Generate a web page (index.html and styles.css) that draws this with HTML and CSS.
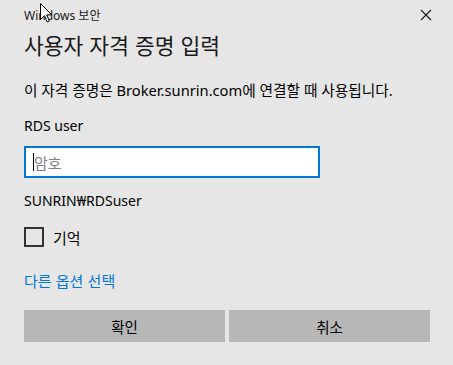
FILE: index.html
```html
<!DOCTYPE html>
<html lang="ko">
<head>
    <meta charset="UTF-8">
    <meta name="viewport" content="width=device-width, initial-scale=1.0">
    <title>Windows 보안</title>
    <link rel="stylesheet" href="styles.css">
</head>
<body>
    <div class="dialog">
        <div class="titlebar">
            <span class="title">Windows 보안</span>
            <svg class="close" width="12" height="12" viewBox="0 0 12 12">
                <path d="M1 1 L11 11 M11 1 L1 11" stroke="#1a1a1a" stroke-width="1.1" fill="none"/>
            </svg>
        </div>

        <h1 class="heading">사용자 자격 증명 입력</h1>
        <p class="desc">이 자격 증명은 Broker.sunrin.com에 연결할 때 사용됩니다.</p>

        <div class="user">RDS user</div>
        <div class="password">
            <span class="caret"></span>
            <span class="placeholder">암호</span>
        </div>
        <div class="account">SUNRIN₩RDSuser</div>

        <div class="remember">
            <span class="checkbox"></span>
            <span class="remember-text">기억</span>
        </div>

        <a class="more" href="#">다른 옵션 선택</a>

        <div class="buttons">
            <button type="button">확인</button>
            <button type="button">취소</button>
        </div>
    </div>

    <!-- mouse pointer over the title -->
    <svg class="pointer" width="13" height="20" viewBox="0 0 13 20">
        <path d="M0.5 0.5 L0.5 16.5 L4.5 12.8 L7.2 19 L9.4 18 L6.8 11.9 L11.8 11.9 Z" fill="#fff" stroke="#000" stroke-width="1"/>
    </svg>
</body>
</html>
```

FILE: styles.css
```css
body {
    margin: 0;
    background-color: #e6e6e6;
    font-family: "Noto Sans", "Noto Sans CJK KR", sans-serif;
    color: #000;
}
.dialog {
    position: relative;
    width: 453px;
    height: 365px;
    padding: 0 24px;
    box-sizing: border-box;
}
.titlebar {
    height: 30px;
    display: flex;
    align-items: center;
    justify-content: space-between;
    margin-right: -3px;
}
.title {
    font-size: 12px;
    color: #1a1a1a;
}
.heading {
    margin: 0;
    font-size: 21.5px;
    font-weight: normal;
    line-height: 30px;
    color: #1a1a1a;
    font-family: "Noto Sans CJK KR", sans-serif;
}
.desc {
    margin: 20px 0 0;
    font-size: 14.7px;
    line-height: 20px;
}
.user {
    margin-top: 16px;
    font-size: 14px;
    line-height: 20px;
}
.password {
    margin-top: 10px;
    width: 296px;
    height: 32px;
    box-sizing: border-box;
    border: 2px solid #0078d7;
    background-color: #fff;
    display: flex;
    align-items: center;
    padding-left: 7px;
}
.caret {
    width: 1px;
    height: 18px;
    background-color: #000;
}
.placeholder {
    font-size: 15px;
    color: #808080;
    font-family: "Noto Sans CJK KR", sans-serif;
}
.account {
    margin-top: 13px;
    font-size: 14px;
    line-height: 20px;
}
.remember {
    margin-top: 16px;
    display: flex;
    align-items: center;
    height: 20px;
}
.checkbox {
    width: 20px;
    height: 20px;
    box-sizing: border-box;
    border: 2px solid #333;
}
.remember-text {
    margin-left: 9px;
    font-size: 15px;
    font-family: "Noto Sans CJK KR", sans-serif;
}
.more {
    display: block;
    margin-top: 24px;
    font-size: 15px;
    line-height: 20px;
    color: #0078d7;
    text-decoration: none;
    font-family: "Noto Sans CJK KR", sans-serif;
}
.buttons {
    margin-top: 19px;
    display: grid;
    grid-template-columns: 201px 201px;
    gap: 4px;
}
.buttons button {
    height: 32px;
    border: none;
    background-color: #b7b7b7;
    font-family: "Noto Sans CJK KR", sans-serif;
    font-size: 14.5px;
    color: #000;
    padding: 0;
}
.pointer {
    position: absolute;
    left: 40px;
    top: 3px;
}
```
